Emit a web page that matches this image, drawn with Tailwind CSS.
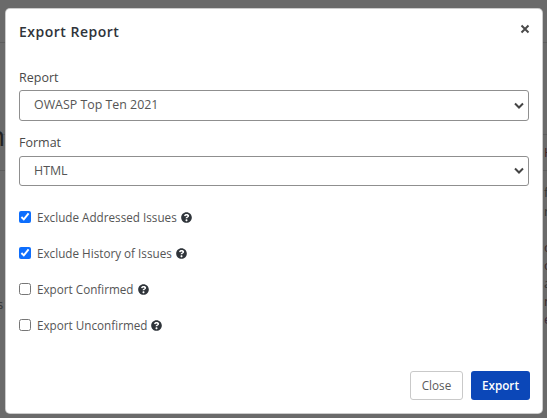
<!doctype html>
<html>
<head>
<meta charset="utf-8">
<script src="https://cdn.jsdelivr.net/npm/@tailwindcss/browser@4"></script>
</head>
<body class="m-0 w-[547px] h-[418px] overflow-hidden bg-[#6a6a6a] font-['Open_Sans',sans-serif]">
<div class="relative w-[547px] h-[418px] overflow-hidden pt-2 pl-[5px]">
  <div class="absolute left-0 top-[42px] h-px w-[547px] bg-[#5c5c5c]"></div>
  <div class="absolute left-0 top-[134px] h-px w-[547px] bg-[#5c5c5c]"></div>
  <div class="absolute left-0 top-[170px] h-px w-[547px] bg-[#5c5c5c]"></div>
  <div class="absolute left-[-12px] top-[119px] text-[28px] leading-8 text-[#222]">n</div>
  <div class="absolute left-[-3px] top-[296px] text-[13px] leading-4 text-[#333]">s</div>
  <div class="absolute left-[544px] top-[144px] text-[13px] leading-4 text-[#3d2222]">H</div>
  <div class="absolute left-[544px] top-[184px] text-[13px] leading-4 text-[#333]">f</div>
  <div class="absolute left-[544px] top-[203px] text-[13px] leading-4 text-[#333]">r</div>
  <div class="absolute left-[544px] top-[239px] text-[13px] leading-4 text-[#3a2a2a]">o</div>
  <div class="absolute left-[544px] top-[257px] text-[13px] leading-4 text-[#3a2a2a]">o</div>
  <div class="absolute left-[544px] top-[275px] text-[13px] leading-4 text-[#333]">a</div>
  <div class="absolute left-[544px] top-[293px] text-[13px] leading-4 text-[#3a2a2a]">n</div>
  <div class="absolute left-[544px] top-[311px] text-[13px] leading-4 text-[#3a2a3a]">e</div>
  <div class="relative w-[538px] h-[406px] flex flex-col rounded-[5px] bg-white text-[#555] border border-black/20">
    <div class="flex justify-between items-start pl-[13px] pr-[12px] pt-[13px] h-[44px]">
      <h5 class="text-[14px] leading-[20px] font-semibold tracking-[0.5px] text-[#2f343a]">Export Report</h5>
      <svg class="mt-[2px]" width="10" height="10" viewBox="0 0 10 10"><path d="M1.500 1.500L8.500 8.500M8.500 1.500L1.500 8.500" stroke="#4a4a4a" stroke-width="2"/></svg>
    </div>
    <div class="flex flex-col px-[13px] pt-[16px]">
      <label class="text-[12.5px] leading-[18px] mb-[3px] text-[#4a4a4a]">Report</label>
      <div class="flex items-center justify-between h-[31px] border border-[#8f8f8f] rounded-[3px] pl-[14px] pr-[3px] text-[12.4px]">
        <span>OWASP Top Ten 2021</span>
        <svg width="12" height="8" viewBox="0 0 12 8"><path d="M2 1.500L6 5.500L10 1.500" fill="none" stroke="#444" stroke-width="2"/></svg>
      </div>
      <label class="text-[12.5px] leading-[18px] mt-[13px] mb-[4px] text-[#4a4a4a]">Format</label>
      <div class="flex items-center justify-between h-[30px] border border-[#8f8f8f] rounded-[3px] pl-[14px] pr-[3px] text-[12.4px]">
        <span>HTML</span>
        <svg width="12" height="8" viewBox="0 0 12 8"><path d="M2 1.500L6 5.500L10 1.500" fill="none" stroke="#444" stroke-width="2"/></svg>
      </div>
      <div class="flex flex-col gap-[18px] mt-[22px] text-[11.7px] leading-[18px]">
        <div class="flex items-center gap-[6px]">
          <input type="checkbox" checked class="m-0 w-[12px] h-[12px] accent-[#0d6efd]">
          <span>Exclude Addressed Issues</span>
          <svg class="ml-[-2px]" width="11" height="11" viewBox="0 0 512 512"><path fill="#2f343a" d="M504 256c0 137-111 248-248 248S8 393 8 256 119 8 256 8s248 111 248 248zM262.700 90c-54.500 0-89.300 23-116.500 63.700-3.500 5.300-2.400 12.400 2.700 16.300l34.700 26.300c5.200 3.900 12.600 3 16.700-2.100 17.900-22.700 30.100-35.800 57.300-35.800 20.400 0 45.700 13.100 45.700 32.900 0 15-12.400 22.700-32.600 34-23.600 13.200-54.800 29.700-54.800 70.900V280c0 6.600 5.400 12 12 12h56c6.600 0 12-5.400 12-12v-1.300c0-28.600 83.500-29.800 83.500-107.100 0-58.200-60.400-81.600-116.500-81.600zM256 338c-25.400 0-46 20.600-46 46s20.600 46 46 46 46-20.600 46-46-20.600-46-46-46z"/></svg>
        </div>
        <div class="flex items-center gap-[6px]">
          <input type="checkbox" checked class="m-0 w-[12px] h-[12px] accent-[#0d6efd]">
          <span>Exclude History of Issues</span>
          <svg class="ml-[-2px]" width="11" height="11" viewBox="0 0 512 512"><path fill="#2f343a" d="M504 256c0 137-111 248-248 248S8 393 8 256 119 8 256 8s248 111 248 248zM262.700 90c-54.500 0-89.300 23-116.500 63.700-3.500 5.300-2.400 12.400 2.700 16.300l34.700 26.300c5.200 3.900 12.600 3 16.700-2.100 17.900-22.700 30.100-35.800 57.300-35.800 20.400 0 45.700 13.100 45.700 32.900 0 15-12.400 22.700-32.600 34-23.600 13.200-54.800 29.700-54.800 70.900V280c0 6.600 5.400 12 12 12h56c6.600 0 12-5.400 12-12v-1.300c0-28.600 83.500-29.800 83.500-107.100 0-58.200-60.400-81.600-116.500-81.600zM256 338c-25.400 0-46 20.600-46 46s20.600 46 46 46 46-20.600 46-46-20.600-46-46-46z"/></svg>
        </div>
        <div class="flex items-center gap-[6px]">
          <input type="checkbox" class="m-0 w-[12px] h-[12px]">
          <span>Export Confirmed</span>
          <svg class="ml-[-2px]" width="11" height="11" viewBox="0 0 512 512"><path fill="#2f343a" d="M504 256c0 137-111 248-248 248S8 393 8 256 119 8 256 8s248 111 248 248zM262.700 90c-54.500 0-89.300 23-116.500 63.700-3.500 5.300-2.400 12.400 2.700 16.300l34.700 26.300c5.200 3.900 12.600 3 16.700-2.100 17.900-22.700 30.100-35.800 57.300-35.800 20.400 0 45.700 13.100 45.700 32.900 0 15-12.400 22.700-32.600 34-23.600 13.200-54.800 29.700-54.800 70.900V280c0 6.600 5.400 12 12 12h56c6.600 0 12-5.400 12-12v-1.300c0-28.600 83.500-29.800 83.500-107.100 0-58.200-60.400-81.600-116.500-81.600zM256 338c-25.400 0-46 20.600-46 46s20.600 46 46 46 46-20.600 46-46-20.600-46-46-46z"/></svg>
        </div>
        <div class="flex items-center gap-[6px]">
          <input type="checkbox" class="m-0 w-[12px] h-[12px]">
          <span>Export Unconfirmed</span>
          <svg class="ml-[-2px]" width="11" height="11" viewBox="0 0 512 512"><path fill="#2f343a" d="M504 256c0 137-111 248-248 248S8 393 8 256 119 8 256 8s248 111 248 248zM262.700 90c-54.500 0-89.300 23-116.500 63.700-3.500 5.300-2.400 12.400 2.700 16.300l34.700 26.300c5.200 3.900 12.600 3 16.700-2.100 17.900-22.700 30.100-35.800 57.300-35.800 20.400 0 45.700 13.100 45.700 32.900 0 15-12.400 22.700-32.600 34-23.600 13.200-54.800 29.700-54.800 70.900V280c0 6.600 5.400 12 12 12h56c6.600 0 12-5.400 12-12v-1.300c0-28.600 83.500-29.800 83.500-107.100 0-58.200-60.400-81.600-116.500-81.600zM256 338c-25.400 0-46 20.600-46 46s20.600 46 46 46 46-20.600 46-46-20.600-46-46-46z"/></svg>
        </div>
      </div>
    </div>
    <div class="mt-auto flex justify-end gap-2 pr-[12px] pb-[13px]">
      <button class="h-[29px] w-[53px] rounded-[3px] border border-[#c9c9c9] bg-white text-[11.7px] text-[#5a5a5a]">Close</button>
      <button class="h-[29px] w-[59px] rounded-[3px] bg-[#0b47b8] text-[11.7px] font-semibold text-white">Export</button>
    </div>
  </div>
</div>
</body>
</html>
